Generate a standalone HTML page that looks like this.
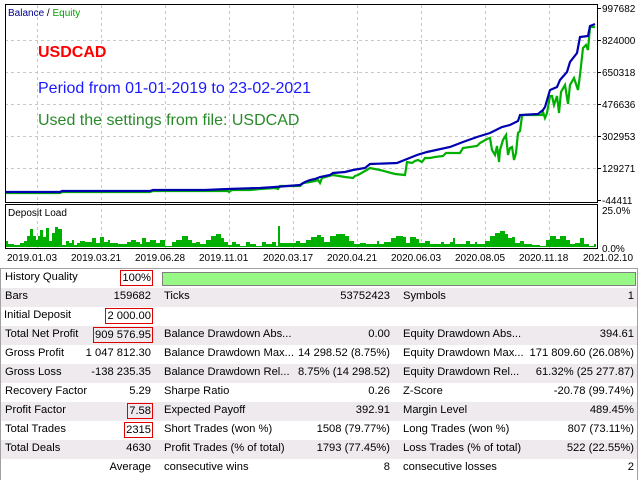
<!DOCTYPE html>
<html><head><meta charset="utf-8"><style>
*{margin:0;padding:0;box-sizing:border-box}
body{width:640px;height:480px;background:#fff;position:relative;overflow:hidden;font-family:"Liberation Sans",sans-serif}
.row{position:absolute;left:1px;width:636px;height:19px;font-size:11.2px;color:#000}
.row.g{background:#eeeaee}
.row > span{position:absolute;top:2px;white-space:nowrap}
.row > span.bx{top:1px}
.box{position:static;border:1px solid #e00000;padding:0 1px;margin-right:-2px;display:inline-block;line-height:14px}
</style></head><body>
<svg width="640" height="268" style="position:absolute;left:0;top:0" font-family="Liberation Sans, sans-serif">
<g stroke="#c8c8c8" stroke-dasharray="3,3" stroke-width="1">
<line x1="37.5" y1="5" x2="37.5" y2="248"/><line x1="101.5" y1="5" x2="101.5" y2="248"/><line x1="165.5" y1="5" x2="165.5" y2="248"/><line x1="229.5" y1="5" x2="229.5" y2="248"/><line x1="293.5" y1="5" x2="293.5" y2="248"/><line x1="357.5" y1="5" x2="357.5" y2="248"/><line x1="421.5" y1="5" x2="421.5" y2="248"/><line x1="485.5" y1="5" x2="485.5" y2="248"/><line x1="549.5" y1="5" x2="549.5" y2="248"/>
<line x1="5" y1="40.5" x2="597" y2="40.5"/><line x1="5" y1="72.5" x2="597" y2="72.5"/><line x1="5" y1="104.5" x2="597" y2="104.5"/><line x1="5" y1="136.5" x2="597" y2="136.5"/><line x1="5" y1="168.5" x2="597" y2="168.5"/>
</g>
<polyline fill="none" stroke="#00b000" stroke-width="2.2" points="5,193 60,193 62,192 150,192 153,191 205,191 228,191 229,192 232,190 250,190 260,189 275,188 278,189 280,186 300,186 303,183 310,182 315,181 318,180 320,183 322,178 333,175 345,177 353,178 355,176 358,175 365,171 370,168 380,170 395,174 405,175 407,162 412,163 415,161 418,160 422,162 425,158 430,158 435,157 443,156 446,153 460,153 463,148 477,146 480,143 487,139 490,138 492,150 495,155 497,146 499,162 500,150 503,140 506,135 508,155 510,148 512,147 514,160 516,153 518,133 520,131 522,116 524,115 542,115 543,112 545,118 547,113 550,96 552,96 554,105 557,96 559,113 561,92 565,85 568,104 570,85 574,78 578,90 580,75 583,48 586,45 588,50 590,27 595,27"/>
<polyline fill="none" stroke="#0000b0" stroke-width="2.2" points="5,192 60,192 62,191 150,191 153,190 205,190 228,189 260,188 275,187 300,185 305,182 310,180 315,179 320,177 330,175 333,173 345,172 353,170 365,168 370,164 397,163 407,159 417,155 427,152 450,147 463,142 477,137 490,133 502,127 510,125 518,121 520,115 538,114 543,110 545,107 550,90 557,87 560,80 567,72 570,62 577,53 580,37 588,36 590,26 595,24"/>
<path fill="#00b000" d="M5,247 V241 H8 V244 H14 V245 H20 V243 H24 V241 H27 V236 H30 V229 H33 V236 H36 V240 H38 V236 H40 V230 H43 V237 H46 V228 H49 V241 H52 V233 H55 V227 H58 V229 H62 V245 H66 V241 H69 V243 H72 V240 H74 V245 H77 V243 H80 V241 H85 V242 H88 V242 H92 V238 H96 V243 H100 V237 H104 V242 H108 V240 H110 V243 H118 V244 H127 V242 H131 V240 H136 V242 H140 V244 H142 V238 H146 V242 H150 V240 H156 V243 H160 V240 H165 V246 H172 V242 H176 V240 H182 V236 H188 V240 H192 V243 H196 V242 H200 V244 H206 V240 H211 V236 H216 V234 H221 V238 H224 V242 H228 V245 H232 V242 H236 V244 H240 V246 H246 V242 H250 V244 H256 V246 H262 V242 H266 V244 H272 V242 H276 V246 H278 V226 H280 V243 H296 V241 H300 V243 H306 V240 H311 V237 H317 V235 H321 V237 H324 V242 H330 V236 H336 V234 H345 V236 H349 V241 H354 V244 H360 V243 H366 V244 H377 V241 H379 V244 H384 V242 H391 V238 H396 V236 H403 V237 H406 V243 H410 V237 H416 V239 H419 V243 H425 V241 H430 V244 H441 V242 H444 V244 H450 V242 H453 V238 H455 V244 H463 V244 H466 V241 H470 V244 H475 V242 H477 V244 H485 V241 H490 V236 H495 V233 H500 V231 H505 V234 H508 V238 H512 V237 H515 V243 H520 V241 H524 V244 H532 V245 H540 V246 H546 V240 H550 V236 H556 V239 H560 V236 H566 V240 H570 V244 H575 V243 H580 V238 H584 V244 H589 V246 H594 V244 H596 V247 Z"/>
<rect x="5.5" y="4.5" width="592" height="198" fill="none" stroke="#000"/>
<rect x="5.5" y="204.5" width="592" height="44" fill="none" stroke="#000"/>
<g stroke="#000"><line x1="597" y1="8.5" x2="601" y2="8.5"/><line x1="597" y1="40.5" x2="601" y2="40.5"/><line x1="597" y1="72.5" x2="601" y2="72.5"/><line x1="597" y1="104.5" x2="601" y2="104.5"/><line x1="597" y1="136.5" x2="601" y2="136.5"/><line x1="597" y1="168.5" x2="601" y2="168.5"/><line x1="597" y1="200.5" x2="601" y2="200.5"/></g>
<g font-size="10" fill="#000">
<text x="602" y="12">997682</text><text x="602" y="44">824000</text><text x="602" y="76">650318</text><text x="602" y="108">476636</text><text x="602" y="140">302953</text><text x="602" y="172">129271</text><text x="602" y="204">-44411</text>
<text x="602" y="214">25.0%</text><text x="602" y="252">0.0%</text>
<text x="7" y="261">2019.01.03</text><text x="71" y="261">2019.03.21</text><text x="135" y="261">2019.06.28</text><text x="199" y="261">2019.11.01</text><text x="263" y="261">2020.03.17</text><text x="327" y="261">2020.04.21</text><text x="391" y="261">2020.06.03</text><text x="455" y="261">2020.08.05</text><text x="519" y="261">2020.11.18</text><text x="583" y="261">2021.02.10</text>
<text x="8" y="216">Deposit Load</text>
<text x="8" y="16"><tspan fill="#00008c">Balance</tspan> / <tspan fill="#00a000">Equity</tspan></text>
</g>
<text x="38" y="57" font-size="16" font-weight="bold" fill="#ff0000">USDCAD</text>
<text x="38" y="93" font-size="16" fill="#1a1aff">Period from 01-01-2019 to 23-02-2021</text>
<text x="38" y="125" font-size="16" fill="#2a8a2a">Used the settings from file: USDCAD</text>
</svg>
<div style="position:absolute;left:0;top:268px;width:638px;height:212px;border:1px solid #a0a0a0;border-bottom:none"></div>
<div style="position:absolute;left:162px;top:272px;width:474px;height:14px;background:#98f886;border:1px solid #808080"></div>
<div class="row" style="top:269px"><span style="left:4px">History Quality</span><span class="bx" style="right:486px"><span class="box">100%</span></span></div>
<div class="row g" style="top:288px"><span style="left:4px">Bars</span><span style="right:486px">159682</span><span style="left:163px">Ticks</span><span style="right:247px">53752423</span><span style="left:402px">Symbols</span><span style="right:3px">1</span></div>
<div class="row" style="top:307px"><span style="left:3px">Initial Deposit</span><span class="bx" style="right:486px"><span class="box">2 000.00</span></span></div>
<div class="row g" style="top:326px"><span style="left:4px">Total Net Profit</span><span class="bx" style="right:486px"><span class="box">909 576.95</span></span><span style="left:163px">Balance Drawdown Abs...</span><span style="right:247px">0.00</span><span style="left:402px">Equity Drawdown Abs...</span><span style="right:3px">394.61</span></div>
<div class="row" style="top:345px"><span style="left:4px">Gross Profit</span><span style="right:486px">1 047 812.30</span><span style="left:163px">Balance Drawdown Max...</span><span style="right:247px">14 298.52 (8.75%)</span><span style="left:402px">Equity Drawdown Max...</span><span style="right:3px">171 809.60 (26.08%)</span></div>
<div class="row g" style="top:364px"><span style="left:4px">Gross Loss</span><span style="right:486px">-138 235.35</span><span style="left:163px">Balance Drawdown Rel...</span><span style="right:247px">8.75% (14 298.52)</span><span style="left:402px">Equity Drawdown Rel...</span><span style="right:3px">61.32% (25 277.87)</span></div>
<div class="row" style="top:383px"><span style="left:4px">Recovery Factor</span><span style="right:486px">5.29</span><span style="left:163px">Sharpe Ratio</span><span style="right:247px">0.26</span><span style="left:402px">Z-Score</span><span style="right:3px">-20.78 (99.74%)</span></div>
<div class="row g" style="top:402px"><span style="left:4px">Profit Factor</span><span class="bx" style="right:486px"><span class="box">7.58</span></span><span style="left:163px">Expected Payoff</span><span style="right:247px">392.91</span><span style="left:402px">Margin Level</span><span style="right:3px">489.45%</span></div>
<div class="row" style="top:421px"><span style="left:4px">Total Trades</span><span class="bx" style="right:486px"><span class="box">2315</span></span><span style="left:163px">Short Trades (won %)</span><span style="right:247px">1508 (79.77%)</span><span style="left:402px">Long Trades (won %)</span><span style="right:3px">807 (73.11%)</span></div>
<div class="row g" style="top:440px"><span style="left:4px">Total Deals</span><span style="right:486px">4630</span><span style="left:163px">Profit Trades (% of total)</span><span style="right:247px">1793 (77.45%)</span><span style="left:402px">Loss Trades (% of total)</span><span style="right:3px">522 (22.55%)</span></div>
<div class="row" style="top:459px"><span style="right:486px">Average</span><span style="left:163px">consecutive wins</span><span style="right:247px">8</span><span style="left:402px">consecutive losses</span><span style="right:3px">2</span></div>
</body></html>
